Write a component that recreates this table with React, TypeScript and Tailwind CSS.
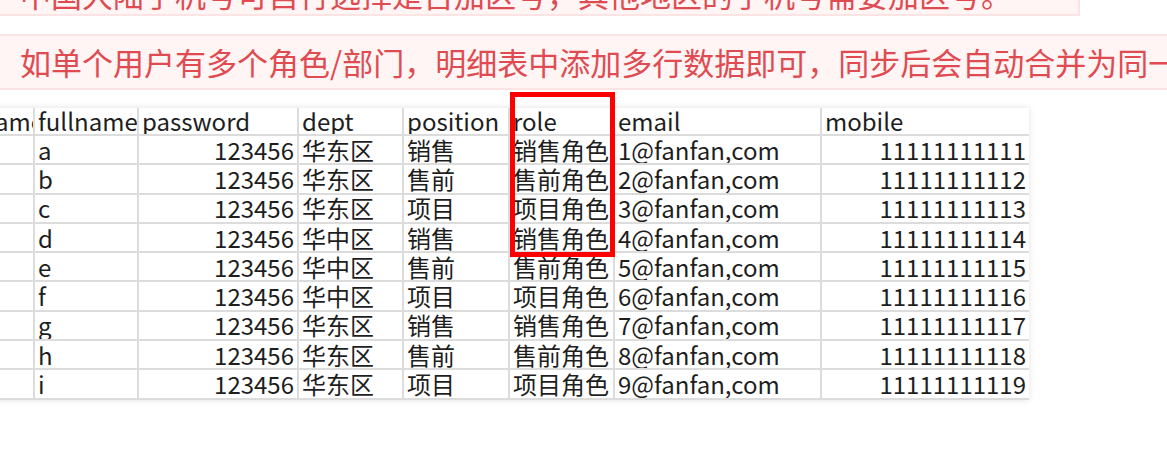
const columns = [
  { key: "username", width: "w-[105px]", right: false },
  { key: "fullname", width: "w-[104px]", right: false },
  { key: "password", width: "w-[160px]", right: true },
  { key: "dept", width: "w-[105px]", right: false },
  { key: "position", width: "w-[106px]", right: false },
  { key: "role", width: "w-[105px]", right: false },
  { key: "email", width: "w-[207px]", right: false },
  { key: "mobile", width: "w-[207px]", right: true },
]

const depts = ["华东区", "华东区", "华东区", "华中区", "华中区", "华中区", "华东区", "华东区", "华东区"]
const positions = ["销售", "售前", "项目"]
const names = ["a", "b", "c", "d", "e", "f", "g", "h", "i"]

const rows = names.map((n, i) => {
  const pos = positions[i % 3]
  return [
    "",
    n,
    "123456",
    depts[i],
    pos,
    pos + "角色",
    `${i + 1}@fanfan,com`,
    `1111111111${i + 1}`,
  ]
})

function Row({ cells, header }: { cells: string[]; header?: boolean }) {
  return (
    <div className={`flex ${header ? "h-[28px]" : "h-[29.3px]"}`}>
      {cells.map((c, i) => {
        const col = columns[i]
        return (
          <div
            key={i}
            className={`${col.width} flex items-center overflow-hidden whitespace-nowrap border-b-2 border-[#dcdcdc] ${
              i < cells.length - 1 ? "border-r-2" : ""
            } ${!header && col.right ? "justify-end pr-[3px]" : i === 0 ? "pl-[2px]" : "pl-[3px]"}`}
          >
            {c}
          </div>
        )
      })}
    </div>
  )
}

export default function App() {
  return (
    <div
      className="h-[466px] w-[1167px] overflow-hidden bg-white"
      style={{ fontFamily: '"Noto Sans CJK SC", "Noto Sans", sans-serif' }}
    >
      <div className="-ml-[4px] flex flex-col">
        <div className="-mt-[38px] w-[1084px] whitespace-nowrap border-2 border-[#fde4e4] bg-[#fff5f5] pl-[22px] pt-[10px] text-[31px] leading-[40px] text-[#df4b51]">
          中国大陆手机号可自行选择是否加区号，其他地区的手机号需要加区号。
        </div>
        <div className="mt-[18px] flex h-[56px] w-[1200px] items-center overflow-hidden whitespace-nowrap border-2 border-[#fde4e4] bg-[#fff5f5] pl-[22px] text-[31px] leading-8 text-[#df4b51]">
          如单个用户有多个角色/部门，明细表中添加多行数据即可，同步后会自动合并为同一个用户
        </div>
      </div>

      <div className="relative -ml-[70px] mt-[18px] w-[1099px] bg-white text-[24px] leading-none text-[#1e1e1e] shadow-[0_0_6px_rgba(0,0,0,0.12)]">
        <Row header cells={columns.map((c) => c.key)} />
        {rows.map((r, i) => (
          <Row key={i} cells={r} />
        ))}
        <div className="absolute left-[580px] top-[-16px] h-[165px] w-[105px] border-[5px] border-[#ff0000]" />
      </div>
    </div>
  )
}
